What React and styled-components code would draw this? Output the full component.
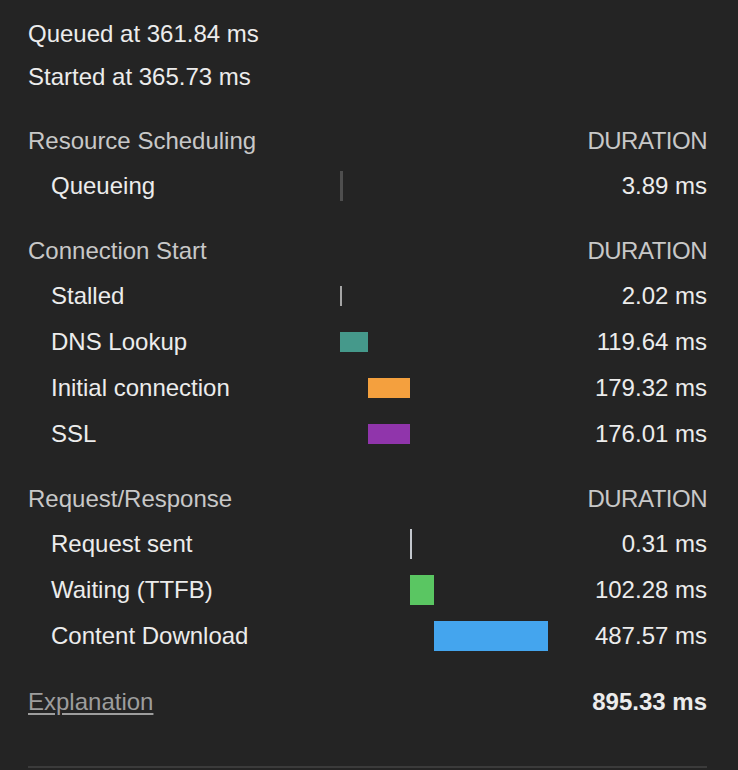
import React from 'react';
import styled, { createGlobalStyle } from 'styled-components';

const GlobalStyle = createGlobalStyle`
  html, body {
    margin: 0;
    padding: 0;
    background: #242424;
  }
  body {
    font-family: "Liberation Sans", Arial, Helvetica, sans-serif;
  }
`;

const Panel = styled.div`
  width: 738px;
  height: 770px;
  box-sizing: border-box;
  padding: 12px 31px 0 28px;
  background: #242424;
  color: #e6e6e6;
  font-size: 24px;
  overflow: hidden;
`;

const Line = styled.div`
  height: 43px;
  line-height: 43px;
  color: #ececec;
`;

const Section = styled.div`
  margin-top: ${(p) => p.$gap}px;
`;

const Row = styled.div`
  display: grid;
  grid-template-columns: 312px 209px 1fr;
  align-items: center;
  height: ${(p) => (p.$header ? 44 : 46)}px;
`;

const Label = styled.div`
  padding-left: ${(p) => (p.$indent ? 23 : 0)}px;
  color: ${(p) => (p.$header ? '#c8c8c8' : '#ececec')};
  white-space: nowrap;
`;

const Value = styled.div`
  text-align: right;
  color: ${(p) => (p.$header ? '#c8c8c8' : '#ececec')};
  font-weight: ${(p) => (p.$bold ? 700 : 400)};
  letter-spacing: ${(p) => (p.$header ? '-0.5px' : 'normal')};
  white-space: nowrap;
`;

const Track = styled.div`
  position: relative;
  height: 30px;
`;

const Bar = styled.div`
  position: absolute;
  top: 50%;
  transform: translateY(-50%);
  left: ${(p) => p.$left}px;
  width: ${(p) => p.$width}px;
  height: ${(p) => p.$height}px;
  background: ${(p) => p.$color};
`;

const Explanation = styled.a`
  color: #9d9d9d;
  text-decoration: underline;
  text-underline-offset: 3px;
  cursor: pointer;
`;

const Divider = styled.div`
  margin-top: 41px;
  height: 2px;
  background: #3b3b3b;
`;

const sections = [
  {
    title: 'Resource Scheduling',
    gap: 21,
    rows: [{ name: 'Queueing', value: '3.89 ms', left: 0, width: 3, height: 30, color: '#4e4e4e' }],
  },
  {
    title: 'Connection Start',
    gap: 20,
    rows: [
      { name: 'Stalled', value: '2.02 ms', left: 0, width: 2, height: 20, color: '#a5a5a5' },
      { name: 'DNS Lookup', value: '119.64 ms', left: 0, width: 28, height: 20, color: '#45998b' },
      { name: 'Initial connection', value: '179.32 ms', left: 28, width: 42, height: 20, color: '#f4a03e' },
      { name: 'SSL', value: '176.01 ms', left: 28, width: 42, height: 20, color: '#9035ab' },
    ],
  },
  {
    title: 'Request/Response',
    gap: 20,
    rows: [
      { name: 'Request sent', value: '0.31 ms', left: 70, width: 2, height: 30, color: '#c3c7cd' },
      { name: 'Waiting (TTFB)', value: '102.28 ms', left: 70, width: 24, height: 30, color: '#5ac662' },
      { name: 'Content Download', value: '487.57 ms', left: 94, width: 114, height: 30, color: '#44a5ee' },
    ],
  },
];

const App = () => {
  return (
    <>
      <GlobalStyle />
      <Panel>
        <Line>Queued at 361.84 ms</Line>
        <Line>Started at 365.73 ms</Line>
        {sections.map((section) => (
          <Section key={section.title} $gap={section.gap}>
            <Row $header>
              <Label $header>{section.title}</Label>
              <div />
              <Value $header>DURATION</Value>
            </Row>
            {section.rows.map((row) => (
              <Row key={row.name}>
                <Label $indent>{row.name}</Label>
                <Track>
                  <Bar $left={row.left} $width={row.width} $height={row.height} $color={row.color} />
                </Track>
                <Value>{row.value}</Value>
              </Row>
            ))}
          </Section>
        ))}
        <Section $gap={20}>
          <Row>
            <Label>
              <Explanation>Explanation</Explanation>
            </Label>
            <div />
            <Value $bold>895.33 ms</Value>
          </Row>
        </Section>
        <Divider />
      </Panel>
    </>
  );
};

export default App;
